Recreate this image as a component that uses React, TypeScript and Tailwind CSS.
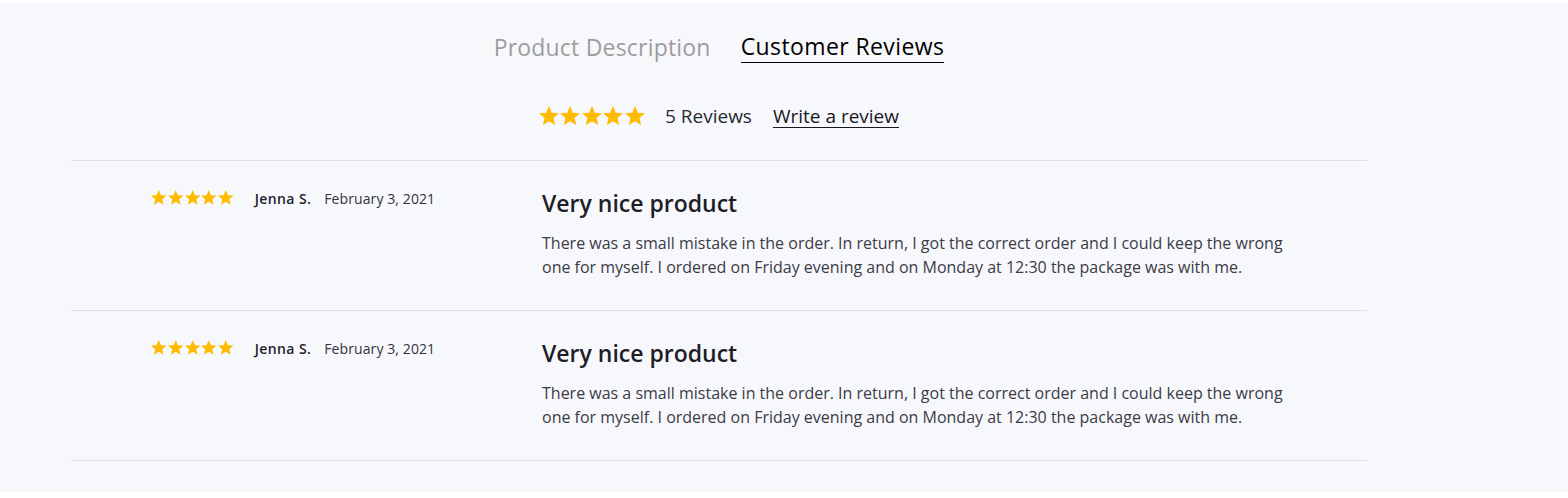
import React from 'react';

const Star = ({ size }: { size: number }) => (
  <svg width={size} height={size} viewBox="2 2 20 20" fill="#ffbb00">
    <path d="M12 17.27L18.18 21l-1.64-7.03L22 9.24l-7.19-.61L12 2 9.19 8.63 2 9.24l5.46 4.73L5.82 21z" />
  </svg>
);

const Stars = ({ size, gap }: { size: number; gap: string }) => (
  <div className={`flex items-center ${gap}`}>
    {[0, 1, 2, 3, 4].map((i) => (
      <Star key={i} size={size} />
    ))}
  </div>
);

const reviews = [
  {
    id: 1,
    name: 'Jenna S.',
    date: 'February 3, 2021',
    title: 'Very nice product',
    body: 'There was a small mistake in the order. In return, I got the correct order and I could keep the wrong one for myself. I ordered on Friday evening and on Monday at 12:30 the package was with me.',
  },
  {
    id: 2,
    name: 'Jenna S.',
    date: 'February 3, 2021',
    title: 'Very nice product',
    body: 'There was a small mistake in the order. In return, I got the correct order and I could keep the wrong one for myself. I ordered on Friday evening and on Monday at 12:30 the package was with me.',
  },
];

const App = () => {
  return (
    <div className="bg-white pt-[3px] w-[1568px] h-[498px] font-['Open_Sans',sans-serif]">
      <section className="bg-[#f7f8fb] h-[489px] pl-[71px]">
        <div className="w-[1296px]">
          <div className="flex justify-center gap-[30px] pt-[27px]">
            <button className="text-[23px] leading-[32px] text-[#9d9d9d] tracking-[0.2px]">Product Description</button>
            <button className="text-[23px] leading-[32px] text-black tracking-[0.4px] border-b border-black">Customer Reviews</button>
          </div>
          <div className="flex items-center justify-center mt-[39px] h-[28px]">
            <Stars size={20} gap="gap-[1.5px]" />
            <span className="ml-[20px] text-[19px] text-[#2a2a33]">5 Reviews</span>
            <a className="ml-[21px] text-[19px] text-[#17171f] underline decoration-1 underline-offset-[4px]">Write a review</a>
          </div>
          <div className="mt-[30px] border-b border-[#dfe0e6]" />
          {reviews.map((r) => (
            <div key={r.id} className="flex border-b border-[#dfe0e6] pt-[26px] pb-[31px]">
              <div className="w-[471px] pl-[80px]">
                <div className="flex items-center h-[22px]">
                  <Stars size={15.5} gap="gap-[1.3px]" />
                  <span className="ml-[21px] text-[14px] font-semibold tracking-[0.4px] text-[#23232d]">{r.name}</span>
                  <span className="ml-[13px] text-[14px] tracking-[0.1px] text-[#33333d]">{r.date}</span>
                </div>
              </div>
              <div className="w-[760px]">
                <h3 className="text-[23px] leading-[32px] font-semibold text-[#1e1e28]">{r.title}</h3>
                <p className="mt-[12px] text-[16px] leading-[24px] text-[#3b3b46]">{r.body}</p>
              </div>
            </div>
          ))}
        </div>
      </section>
    </div>
  );
};

export default App;
